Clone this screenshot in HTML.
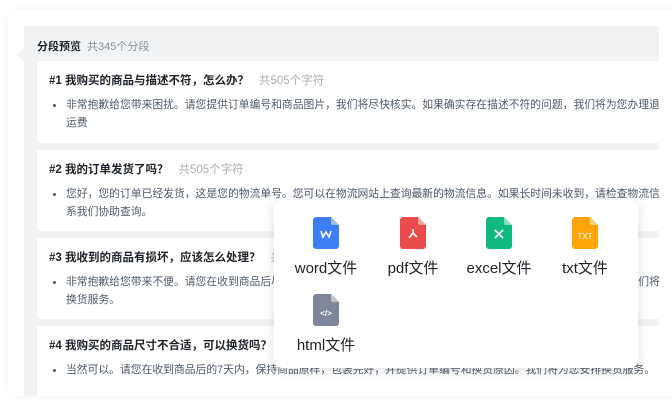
<!DOCTYPE html><html><head><meta charset="utf-8"><style>
*{margin:0;padding:0;box-sizing:border-box}
body{width:671px;height:403px;overflow:hidden;background:#fff;font-family:"Liberation Sans","Noto Sans CJK SC",sans-serif;position:relative}
.card{position:absolute;left:8px;top:10px;width:700px;height:386px;background:#fff;border-radius:10px;box-shadow:0 0 8px rgba(0,0,0,.06)}
.panel{position:absolute;left:24px;top:26px;width:635px;height:370px;background:#f2f3f5}
.notch{position:absolute;left:17px;top:48px;width:0;height:0;border-top:7px solid transparent;border-bottom:7px solid transparent;border-right:7px solid #f2f3f5}
.ttl{position:absolute;left:37px;top:38px;font-size:11px;font-weight:bold;color:#1d2129}
.ttl span{font-weight:normal;color:#86909c;margin-left:6px}
.item{position:absolute;left:37px;width:622px;background:#fff;padding:11px 12px;white-space:nowrap;overflow:hidden}
.item h4{font-size:11.5px;color:#1d2129;line-height:18px}
.item h4 span{font-weight:normal;color:#a9aeb8;margin-left:10px}
.item p{font-size:10.8px;color:#4e5969;line-height:18px;margin-top:6px;padding-left:17px;position:relative;white-space:nowrap}
.item p:before{content:"";position:absolute;left:4px;top:8px;width:3px;height:3px;border-radius:50%;background:#4e5969}
.pop{position:absolute;left:274px;top:200px;width:364px;height:168px;background:#fff;border-radius:8px;box-shadow:0 2px 12px rgba(0,0,0,.12)}
.f{position:absolute;width:90px;text-align:center;font-size:15px;color:#1d2129}
.f svg{display:block;margin:0 auto 8px}
</style></head><body>
<div class="card"></div>
<div class="panel"></div><div class="notch"></div>
<div class="ttl">分段预览<span>共345个分段</span></div>
<div class="item" style="top:61px;height:82px"><h4>#1 我购买的商品与描述不符，怎么办？<span>共505个字符</span></h4><p>非常抱歉给您带来困扰。请您提供订单编号和商品图片，我们将尽快核实。如果确实存在描述不符的问题，我们将为您办理退货并承担<br>运费</p></div>
<div class="item" style="top:150px;height:81px"><h4>#2 我的订单发货了吗？<span>共505个字符</span></h4><p>您好，您的订单已经发货，这是您的物流单号。您可以在物流网站上查询最新的物流信息。如果长时间未收到，请检查物流信息或<br>系我们协助查询。</p></div>
<div class="item" style="top:238px;height:81px"><h4>#3 我收到的商品有损坏，应该怎么处理？<span>共505个字符</span></h4><p>非常抱歉给您带来不便。请您在收到商品后尽快联系我们，并提供商品损坏的照片，我们将会尽快为您安排换货服务。我们将为您<br>换货服务。</p></div>
<div class="item" style="top:326px;height:70px"><h4>#4 我购买的商品尺寸不合适，可以换货吗？<span>共505个字符</span></h4><p>当然可以。请您在收到商品后的7天内，保持商品原样，包装完好，并提供订单编号和换货原因。我们将为您安排换货服务。</p></div>
<div class="pop">
<div class="f" style="left:7px;top:17px"><svg width="26" height="32" viewBox="0 0 26 32"><path d="M3 0h15l8 8v21a3 3 0 0 1-3 3H3a3 3 0 0 1-3-3V3a3 3 0 0 1 3-3z" fill="#3e7ef7"/><path d="M18 0l8 8h-6a2 2 0 0 1-2-2z" fill="#9dbefb"/><path d="M8 14l2 6 3-5 3 5 2-6" stroke="#fff" stroke-width="1.6" fill="none"/></svg>word文件</div>
<div class="f" style="left:94px;top:17px"><svg width="26" height="32" viewBox="0 0 26 32"><path d="M3 0h15l8 8v21a3 3 0 0 1-3 3H3a3 3 0 0 1-3-3V3a3 3 0 0 1 3-3z" fill="#ec4b4b"/><path d="M18 0l8 8h-6a2 2 0 0 1-2-2z" fill="#f6a5a5"/><path d="M13 12v4l-4 5M13 16l4 4" stroke="#fff" stroke-width="1.6" fill="none"/></svg>pdf文件</div>
<div class="f" style="left:180px;top:17px"><svg width="26" height="32" viewBox="0 0 26 32"><path d="M3 0h15l8 8v21a3 3 0 0 1-3 3H3a3 3 0 0 1-3-3V3a3 3 0 0 1 3-3z" fill="#10b981"/><path d="M18 0l8 8h-6a2 2 0 0 1-2-2z" fill="#88dcc0"/><path d="M9 13l8 8M17 13l-8 8" stroke="#fff" stroke-width="1.6"/></svg>excel文件</div>
<div class="f" style="left:266px;top:17px"><svg width="26" height="32" viewBox="0 0 26 32"><path d="M3 0h15l8 8v21a3 3 0 0 1-3 3H3a3 3 0 0 1-3-3V3a3 3 0 0 1 3-3z" fill="#ffa50a"/><path d="M18 0l8 8h-6a2 2 0 0 1-2-2z" fill="#ffd285"/><text x="13" y="22" font-size="8" fill="#fff" text-anchor="middle" font-family="Liberation Sans">TXT</text></svg>txt文件</div>
<div class="f" style="left:7px;top:94px"><svg width="26" height="32" viewBox="0 0 26 32"><path d="M3 0h15l8 8v21a3 3 0 0 1-3 3H3a3 3 0 0 1-3-3V3a3 3 0 0 1 3-3z" fill="#7d8799"/><path d="M18 0l8 8h-6a2 2 0 0 1-2-2z" fill="#bec3cc"/><text x="13" y="22" font-size="8" font-weight="bold" fill="#fff" text-anchor="middle" font-family="Liberation Sans">&lt;/&gt;</text></svg>html文件</div>
</div>
</body></html>
